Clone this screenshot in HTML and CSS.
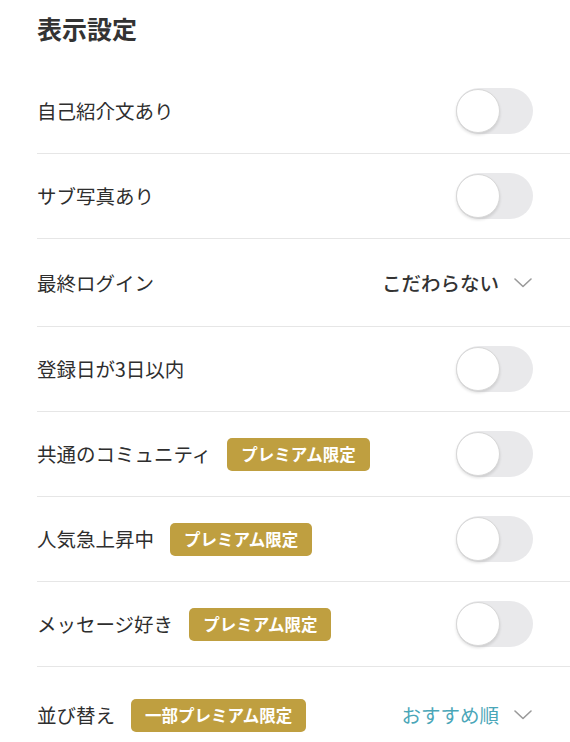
FILE: index.html
```html
<!DOCTYPE html>
<html lang="ja">
<head>
<meta charset="utf-8">
<link rel="stylesheet" href="styles.css">
</head>
<body>
<div class="page">
  <h1 class="title">表示設定</h1>
  <div class="list">
    <div class="row">
      <div class="label">自己紹介文あり</div>
      <div class="toggle"><span class="knob"></span></div>
    </div>
    <div class="row">
      <div class="label">サブ写真あり</div>
      <div class="toggle"><span class="knob"></span></div>
    </div>
    <div class="row row-select">
      <div class="label">最終ログイン</div>
      <div class="select">
        <span class="select-value">こだわらない</span>
        <svg class="chev" width="18" height="10" viewBox="0 0 18 10"><path d="M1 1 L9 8.5 L17 1" fill="none" stroke="#9a9a9a" stroke-width="1.6" stroke-linecap="round" stroke-linejoin="round"/></svg>
      </div>
    </div>
    <div class="row">
      <div class="label">登録日が3日以内</div>
      <div class="toggle"><span class="knob"></span></div>
    </div>
    <div class="row">
      <div class="label">共通のコミュニティ<span class="badge">プレミアム限定</span></div>
      <div class="toggle"><span class="knob"></span></div>
    </div>
    <div class="row">
      <div class="label">人気急上昇中<span class="badge">プレミアム限定</span></div>
      <div class="toggle"><span class="knob"></span></div>
    </div>
    <div class="row">
      <div class="label">メッセージ好き<span class="badge">プレミアム限定</span></div>
      <div class="toggle"><span class="knob"></span></div>
    </div>
    <div class="row row-last">
      <div class="label">並び替え<span class="badge">一部プレミアム限定</span></div>
      <div class="select">
        <span class="select-value accent">おすすめ順</span>
        <svg class="chev" width="18" height="10" viewBox="0 0 18 10"><path d="M1 1 L9 8.5 L17 1" fill="none" stroke="#9a9a9a" stroke-width="1.6" stroke-linecap="round" stroke-linejoin="round"/></svg>
      </div>
    </div>
  </div>
</div>
</body>
</html>
```

FILE: styles.css
```css
html, body {
  margin: 0;
  padding: 0;
  background: #ffffff;
}
body {
  font-family: "Noto Sans CJK JP", "Noto Sans", sans-serif;
  color: #333333;
}
.page {
  padding-left: 37px;
}
.title {
  margin: 0;
  padding-top: 11px;
  height: 58px;
  font-size: 25px;
  line-height: 34px;
  font-weight: 700;
  color: #333333;
}
.list {
  display: flex;
  flex-direction: column;
}
.row {
  display: flex;
  align-items: center;
  justify-content: space-between;
  height: 85px;
  padding-right: 37px;
  border-bottom: 1px solid #e6e6e6;
  box-sizing: border-box;
}
.row-select {
  height: 88px;
}
.row-last {
  border-bottom: none;
  height: 96px;
}
.label {
  display: flex;
  align-items: center;
  font-size: 19.5px;
  line-height: 28px;
  font-weight: 400;
  color: #2e2e2e;
}
.badge {
  display: inline-flex;
  align-items: center;
  height: 33px;
  margin-left: 16px;
  padding: 0 14px;
  border-radius: 5px;
  background: #bf9f40;
  color: #ffffff;
  font-size: 16.5px;
  font-weight: 700;
  line-height: 1;
}
.toggle {
  position: relative;
  width: 77px;
  height: 46px;
  border-radius: 23px;
  background: #e9e9eb;
}
.knob {
  position: absolute;
  left: 0;
  top: 1px;
  width: 44px;
  height: 44px;
  border-radius: 50%;
  background: #ffffff;
  border: 1px solid #d8d8d8;
  box-sizing: border-box;
  box-shadow: 0 2px 3px rgba(0,0,0,0.12);
}
.select {
  display: flex;
  align-items: center;
  gap: 15px;
}
.select-value {
  font-size: 19.5px;
  line-height: 28px;
  font-weight: 500;
  color: #333333;
}
.select-value.accent {
  color: #4aa6b8;
  font-weight: 400;
}
.chev {
  display: block;
  margin-right: 1px;
}
```
